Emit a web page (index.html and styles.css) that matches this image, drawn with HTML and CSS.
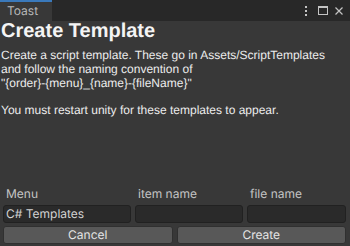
FILE: index.html
```html
<!DOCTYPE html>
<html>
<head>
<meta charset="utf-8">
<link rel="stylesheet" href="styles.css">
</head>
<body>
<div class="window">
  <div class="tabbar">
    <div class="tab">Toast</div>
    <div class="tab-icons">
      <svg class="ico kebab" width="2" height="10" viewBox="0 0 2 10"><rect x="0" y="0" width="2" height="2" fill="#c4c4c4"/><rect x="0" y="4" width="2" height="2" fill="#c4c4c4"/><rect x="0" y="8" width="2" height="2" fill="#c4c4c4"/></svg>
      <svg class="ico maxi" width="10" height="9" viewBox="0 0 10 9"><rect x="0.5" y="0.5" width="9" height="8" fill="none" stroke="#c4c4c4" stroke-width="1"/><rect x="0" y="0" width="10" height="2" fill="#c4c4c4"/></svg>
      <svg class="ico" width="8" height="8" viewBox="0 0 8 8"><path d="M0.5 0.5 L7.5 7.5 M7.5 0.5 L0.5 7.5" stroke="#c4c4c4" stroke-width="1.2"/></svg>
    </div>
  </div>
  <div class="content">
    <h1 class="title">Create Template</h1>
    <p class="desc">Create a script template. These go in Assets/ScriptTemplates<br>and follow the naming convention of<br>"{order}-{menu}_{name}-{fileName}"<br><br>You must restart unity for these templates to appear.</p>
    <div class="spacer"></div>
    <div class="fields">
      <div class="field">
        <div class="label">Menu</div>
        <div class="input">C# Templates</div>
      </div>
      <div class="field">
        <div class="label">item name</div>
        <div class="input"></div>
      </div>
      <div class="field">
        <div class="label">file name</div>
        <div class="input"></div>
      </div>
    </div>
    <div class="buttons">
      <div class="button">Cancel</div>
      <div class="button">Create</div>
    </div>
  </div>
</div>
</body>
</html>
```
FILE: styles.css
```css
html, body {
  margin: 0;
  padding: 0;
  background: #383838;
  text-rendering: geometricPrecision;
}
.window {
  width: 350px;
  height: 246px;
  display: flex;
  flex-direction: column;
  overflow: hidden;
}
.tabbar {
  height: 21px;
  background: #282828;
  display: flex;
  justify-content: space-between;
  align-items: stretch;
  flex-shrink: 0;
}
.tab {
  width: 52px;
  box-sizing: border-box;
  background: #383838;
  border-top: 2px solid #3a79bb;
  color: #b8b8b8;
  font-family: Inter, "Liberation Sans", sans-serif;
  font-size: 12px;
  line-height: 18px;
  padding-left: 7px;
}
.tab-icons {
  display: flex;
  align-items: center;
  padding-right: 7px;
}
.ico {
  display: block;
}
.kebab {
  margin-right: 11px;
}
.maxi {
  margin-right: 7px;
}
.content {
  flex: 1;
  display: flex;
  flex-direction: column;
  padding: 0 4px 2px 3px;
}
.title {
  margin: 0 0 0 -2px;
  font-family: "Liberation Sans", Arial, sans-serif;
  font-weight: bold;
  font-size: 20px;
  line-height: 20px;
  color: #f4f4f4;
}
.desc {
  margin: 8px 0 0 -2px;
  font-family: "Liberation Sans", Arial, sans-serif;
  font-size: 12px;
  line-height: 13.8px;
  color: #ececec;
}
.spacer {
  flex: 1;
}
.fields {
  display: grid;
  grid-template-columns: 128px 108px 1fr;
  gap: 4px;
}
.field {
  display: flex;
  flex-direction: column;
}
.label {
  font-family: Inter, "Liberation Sans", sans-serif;
  font-size: 12px;
  line-height: 16px;
  color: #c4c4c4;
  padding-left: 3px;
  margin-bottom: 3px;
}
.input {
  height: 18px;
  box-sizing: border-box;
  background: #2a2a2a;
  border: 1px solid #212121;
  border-radius: 3px;
  font-family: Inter, "Liberation Sans", sans-serif;
  font-size: 12px;
  line-height: 16px;
  color: #d2d2d2;
  padding-left: 2px;
}
.buttons {
  display: grid;
  grid-template-columns: 1fr 1fr;
  gap: 4px;
  margin-top: 3px;
}
.button {
  height: 18px;
  box-sizing: border-box;
  background: #585858;
  border: 1px solid #303030;
  border-radius: 3px;
  font-family: Inter, "Liberation Sans", sans-serif;
  font-size: 12px;
  line-height: 16px;
  color: #e4e4e4;
  text-align: center;
}
```
